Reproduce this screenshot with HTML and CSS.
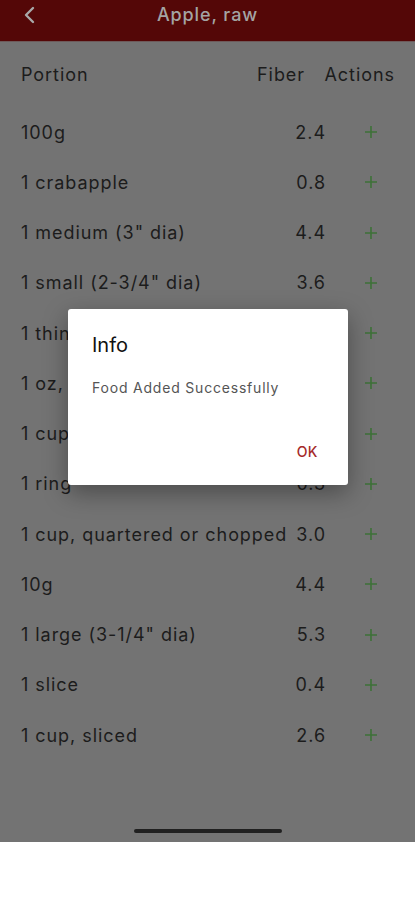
FILE: index.html
```html
<!DOCTYPE html>
<html lang="en">
<head>
    <meta charset="UTF-8">
    <meta name="viewport" content="width=device-width, initial-scale=1.0">
    <title>Apple, raw</title>
    <link rel="stylesheet" href="styles.css">
</head>
<body>
    <div id="screen">
        <div id="nav-bar">
            <svg class="back" width="14" height="18" viewBox="0 0 14 18">
                <path d="M11 2 L4 9 L11 16" fill="none" stroke="#a8a8a8" stroke-width="2.4" stroke-linecap="round" stroke-linejoin="round"/>
            </svg>
            <div class="title">Apple, raw</div>
        </div>

        <div id="table">
            <div class="row head">
                <div class="portion">Portion</div>
                <div class="fiber">Fiber</div>
                <div class="actions">Actions</div>
            </div>
            <div class="row"><div class="portion">100g</div><div class="fiber">2.4</div><div class="actions"><svg class="plus" width="14" height="14" viewBox="0 0 14 14"><path d="M7 1 V13 M1 7 H13"/></svg></div></div>
            <div class="row"><div class="portion">1 crabapple</div><div class="fiber">0.8</div><div class="actions"><svg class="plus" width="14" height="14" viewBox="0 0 14 14"><path d="M7 1 V13 M1 7 H13"/></svg></div></div>
            <div class="row"><div class="portion">1 medium (3" dia)</div><div class="fiber">4.4</div><div class="actions"><svg class="plus" width="14" height="14" viewBox="0 0 14 14"><path d="M7 1 V13 M1 7 H13"/></svg></div></div>
            <div class="row"><div class="portion">1 small (2-3/4" dia)</div><div class="fiber">3.6</div><div class="actions"><svg class="plus" width="14" height="14" viewBox="0 0 14 14"><path d="M7 1 V13 M1 7 H13"/></svg></div></div>
            <div class="row"><div class="portion">1 thin slice</div><div class="fiber">0.3</div><div class="actions"><svg class="plus" width="14" height="14" viewBox="0 0 14 14"><path d="M7 1 V13 M1 7 H13"/></svg></div></div>
            <div class="row"><div class="portion">1 oz, with skin</div><div class="fiber">0.7</div><div class="actions"><svg class="plus" width="14" height="14" viewBox="0 0 14 14"><path d="M7 1 V13 M1 7 H13"/></svg></div></div>
            <div class="row"><div class="portion">1 cup slices</div><div class="fiber">2.6</div><div class="actions"><svg class="plus" width="14" height="14" viewBox="0 0 14 14"><path d="M7 1 V13 M1 7 H13"/></svg></div></div>
            <div class="row"><div class="portion">1 ring</div><div class="fiber">0.3</div><div class="actions"><svg class="plus" width="14" height="14" viewBox="0 0 14 14"><path d="M7 1 V13 M1 7 H13"/></svg></div></div>
            <div class="row"><div class="portion">1 cup, quartered or chopped</div><div class="fiber">3.0</div><div class="actions"><svg class="plus" width="14" height="14" viewBox="0 0 14 14"><path d="M7 1 V13 M1 7 H13"/></svg></div></div>
            <div class="row"><div class="portion">10g</div><div class="fiber">4.4</div><div class="actions"><svg class="plus" width="14" height="14" viewBox="0 0 14 14"><path d="M7 1 V13 M1 7 H13"/></svg></div></div>
            <div class="row"><div class="portion">1 large (3-1/4" dia)</div><div class="fiber">5.3</div><div class="actions"><svg class="plus" width="14" height="14" viewBox="0 0 14 14"><path d="M7 1 V13 M1 7 H13"/></svg></div></div>
            <div class="row"><div class="portion">1 slice</div><div class="fiber">0.4</div><div class="actions"><svg class="plus" width="14" height="14" viewBox="0 0 14 14"><path d="M7 1 V13 M1 7 H13"/></svg></div></div>
            <div class="row"><div class="portion">1 cup, sliced</div><div class="fiber">2.6</div><div class="actions"><svg class="plus" width="14" height="14" viewBox="0 0 14 14"><path d="M7 1 V13 M1 7 H13"/></svg></div></div>
        </div>

        <div id="home-bar"></div>

        <div id="dialog">
            <div class="dialog-title">Info</div>
            <div class="dialog-text">Food Added Successfully</div>
            <div class="dialog-buttons">
                <button class="ok">OK</button>
            </div>
        </div>
    </div>
</body>
</html>
```

FILE: styles.css
```css
/* General Styles */
body {
    margin: 0;
    background-color: #fff;
    font-family: Inter, "Noto Sans", sans-serif;
}

/* Screen (dimmed by the open dialog) */
#screen {
    position: relative;
    height: 842px;
    background-color: #737373;
    display: flex;
    flex-direction: column;
    overflow: hidden;
}

/* Nav Bar */
#nav-bar {
    height: 42px;
    background-color: #540707;
    border-bottom: 1px solid #6e5a5a;
    display: flex;
    align-items: center;
    justify-content: center;
    position: relative;
    box-sizing: border-box;
}

#nav-bar .back {
    position: absolute;
    left: 22px;
    top: 6px;
}

#nav-bar .title {
    color: #a4a4a4;
    font-size: 18px;
    font-weight: 500;
    letter-spacing: 0.9px;
    margin-top: -12px;
}

/* Table */
#table {
    padding: 12px 21px 0 21px;
}

.row {
    display: flex;
    align-items: center;
    height: 50.25px;
    font-size: 18px;
    letter-spacing: 0.95px;
    color: #1c1c1c;
}

.row.head {
    height: 40px;
    margin-bottom: 13px;
}

.portion {
    flex: 1;
    min-width: 0;
    white-space: nowrap;
}

.fiber {
    flex: none;
    width: 70px;
    text-align: right;
}

.actions {
    flex: none;
    width: 68px;
    display: flex;
    align-items: center;
}

.head .fiber {
    padding-right: 24px;
    box-sizing: border-box;
}

.head .actions {
    justify-content: flex-end;
    margin-right: -1px;
}

.plus {
    margin-left: 38px;
    fill: none;
    stroke: #3e7238;
    stroke-width: 1.6;
}

/* Home Indicator */
#home-bar {
    position: absolute;
    bottom: 9px;
    left: 134px;
    width: 148px;
    height: 4px;
    border-radius: 2px;
    background-color: #202020;
}

/* Dialog */
#dialog {
    position: absolute;
    top: 309px;
    left: 68px;
    width: 280px;
    height: 176px;
    background-color: #fff;
    border-radius: 3px;
    box-shadow: 0 8px 24px rgba(0, 0, 0, 0.35);
    box-sizing: border-box;
    padding: 24px 24px 0 24px;
    display: flex;
    flex-direction: column;
}

.dialog-title {
    font-size: 20px;
    color: #111;
    line-height: 24px;
}

.dialog-text {
    margin-top: 22px;
    font-size: 14px;
    letter-spacing: 0.8px;
    color: #555;
}

.dialog-buttons {
    margin-top: auto;
    margin-bottom: 24px;
    text-align: right;
}

.ok {
    background: none;
    border: none;
    padding: 0 6px 0 0;
    font-family: inherit;
    font-size: 14px;
    font-weight: 500;
    letter-spacing: 0.5px;
    color: #a52a2a;
}
```
